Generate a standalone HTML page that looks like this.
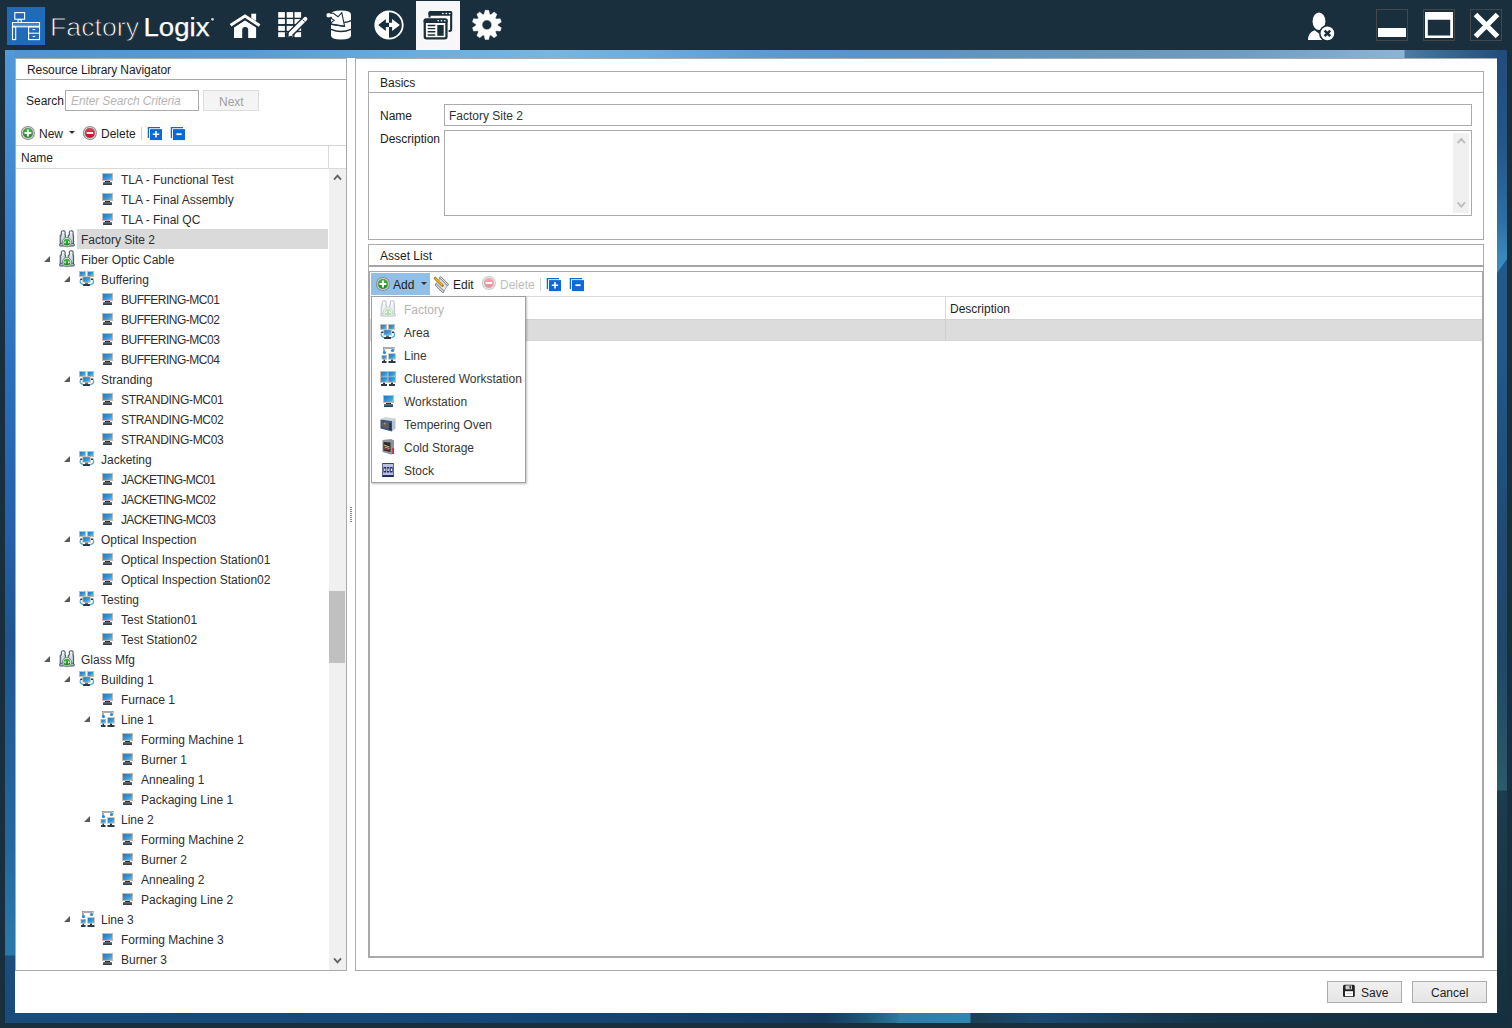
<!DOCTYPE html>
<html><head><meta charset="utf-8">
<style>
*{margin:0;padding:0;box-sizing:border-box}
html,body{width:1512px;height:1028px;overflow:hidden;background:#1a2f3d;font-family:"Liberation Sans", sans-serif;font-size:12px;color:#1a1a1a}
.a{position:absolute}
.ic{position:absolute;overflow:visible}
.t{position:absolute;height:20px;line-height:20px;padding-top:1px;white-space:nowrap;color:#2e2e2e}
.sel{position:absolute;height:20px;background:#dadada}
.mt{position:absolute;height:23px;line-height:23px;padding-top:1px;white-space:nowrap;color:#363636}
.dis{color:#b4b4b4}
.ln{position:absolute;background:#ababab}
</style></head><body>
<svg width="0" height="0" style="position:absolute"><defs><linearGradient id="scr" x1="0" y1="0" x2="1" y2="1"><stop offset="0" stop-color="#1f78c4"/><stop offset="0.6" stop-color="#3a9ad6"/><stop offset="1" stop-color="#6cc6ec"/></linearGradient>
<linearGradient id="kb" x1="0" y1="0" x2="0" y2="1"><stop offset="0" stop-color="#6a747c"/><stop offset="1" stop-color="#2e3840"/></linearGradient>
<linearGradient id="tow" x1="0" y1="0" x2="1" y2="0"><stop offset="0" stop-color="#a9b6bf"/><stop offset="0.5" stop-color="#dfe6ea"/><stop offset="1" stop-color="#9aa8b2"/></linearGradient>
<linearGradient id="grn" x1="0" y1="0" x2="0" y2="1"><stop offset="0" stop-color="#3cc23c"/><stop offset="1" stop-color="#17861d"/></linearGradient>
<linearGradient id="red" x1="0" y1="0" x2="0" y2="1"><stop offset="0" stop-color="#f03a4a"/><stop offset="1" stop-color="#c80a1e"/></linearGradient>
<symbol id="ws" overflow="visible">
 <rect x="3" y="4" width="11" height="8" fill="#c4bcb2"/>
 <rect x="4" y="5" width="9" height="6" fill="url(#scr)"/>
 <rect x="6" y="12" width="5" height="1.2" fill="#26323c"/>
 <rect x="4" y="13" width="9" height="3" rx="0.6" fill="url(#kb)"/>
</symbol>
<symbol id="mon" overflow="visible">
 <rect x="0" y="0" width="7" height="6" fill="#c4bcb2"/>
 <rect x="1" y="1" width="5" height="4" fill="url(#scr)"/>
</symbol>
<symbol id="fac" overflow="visible">
 <path d="M2.3 2.8 Q2.3 1.8 3.5 1.8 H4.9 Q6.1 1.8 6.1 2.8 V6.2 H6.6 V15.2 H1.2 V6.2 H2.3 Z" fill="url(#tow)" stroke="#3e5264" stroke-width="1"/>
 <path d="M10.3 2.8 Q10.3 1.8 11.5 1.8 H12.9 Q14.1 1.8 14.1 2.8 V6.2 H14.6 V15.2 H9.2 V6.2 H10.3 Z" fill="url(#tow)" stroke="#3e5264" stroke-width="1"/>
 <rect x="3" y="3.2" width="2.4" height="1.3" fill="#fff"/>
 <rect x="11" y="3.2" width="2.4" height="1.3" fill="#fff"/>
 <rect x="3.3" y="5.6" width="1.2" height="1.2" fill="#fff" opacity="0.8"/>
 <rect x="11.3" y="5.6" width="1.2" height="1.2" fill="#fff" opacity="0.8"/>
 <path d="M0.6 16.2 Q0.6 14.3 2.5 14.3 H13.5 Q15.4 14.3 15.4 16.2 Q15.4 17 14.5 17 H1.5 Q0.6 17 0.6 16.2 Z" fill="#a9c2d2" stroke="#3e5264" stroke-width="1"/>
 <circle cx="7.9" cy="13.2" r="4.6" fill="#f4f4f4" stroke="#777" stroke-width="0.9"/>
 <circle cx="7.9" cy="13.2" r="3.4" fill="url(#grn)"/>
 <path d="M4.9 13.2 L6.6 11.7 V14.7 Z M10.9 13.2 L9.2 11.7 V14.7 Z" fill="#fff"/>
</symbol>
<symbol id="area" overflow="visible">
 <use href="#mon" x="0" y="2"/>
 <use href="#mon" x="8" y="2"/>
 <path d="M1.5 11 Q0 14 4 15.5 Q8 17 12 15.5 Q16 14 14 11" stroke="#4ab0e0" stroke-width="1.3" fill="none"/>
 <rect x="1.2" y="9.5" width="2.5" height="1.5" fill="#2a3540"/>
 <rect x="11.8" y="9.5" width="2.5" height="1.5" fill="#2a3540"/>
 <rect x="3.3" y="7.4" width="8.5" height="6.2" fill="#c4bcb2"/>
 <rect x="4.2" y="8.2" width="6.7" height="4.6" fill="url(#scr)"/>
 <rect x="6" y="13.7" width="3" height="1" fill="#26323c"/>
 <rect x="4" y="15" width="7" height="2" rx="0.5" fill="#303a42"/>
</symbol>
<symbol id="line" overflow="visible">
 <path d="M4 7 V3 H13.5 V5" stroke="#8a8a8a" stroke-width="2" fill="none"/>
 <path d="M4 7 V3 H13.5 V5" stroke="#f4f4f4" stroke-width="0.6" fill="none"/>
 <circle cx="4.5" cy="7.6" r="1.6" fill="#2f8ad0"/>
 <circle cx="12.5" cy="5.5" r="1.6" fill="#2f8ad0"/>
 <rect x="1.5" y="10" width="5.5" height="4.6" fill="#c4bcb2"/>
 <rect x="2.3" y="10.8" width="3.9" height="3" fill="url(#scr)"/>
 <rect x="8.2" y="8.2" width="7.6" height="6.4" fill="#c4bcb2"/>
 <rect x="9" y="9" width="6" height="4.8" fill="url(#scr)"/>
 <rect x="3.5" y="14.6" width="1.5" height="1.5" fill="#26323c"/>
 <rect x="2" y="16" width="4.5" height="2" fill="#303a42"/>
 <rect x="11" y="14.6" width="2" height="1.5" fill="#26323c"/>
 <rect x="8.5" y="16" width="7" height="2" fill="#303a42"/>
</symbol>
<symbol id="cws" overflow="visible">
 <rect x="0" y="3" width="16" height="11.7" fill="#c4bcb2"/>
 <rect x="1" y="4" width="6.5" height="4.6" fill="url(#scr)"/>
 <rect x="8.5" y="4" width="6.5" height="4.6" fill="url(#scr)"/>
 <rect x="1" y="9.3" width="6.5" height="4.6" fill="url(#scr)"/>
 <rect x="8.5" y="9.3" width="6.5" height="4.6" fill="url(#scr)"/>
 <rect x="3" y="14.7" width="2" height="1.3" fill="#26323c"/>
 <rect x="11" y="14.7" width="2" height="1.3" fill="#26323c"/>
 <rect x="1" y="16" width="6" height="2" fill="#303a42"/>
 <rect x="9" y="16" width="6" height="2" fill="#303a42"/>
</symbol>
<symbol id="oven" overflow="visible">
 <path d="M0.5 5.5 L5 3 L15.5 4.5 L12 7 Z" fill="#ccd6e2"/>
 <path d="M0.5 5.5 L12 7 V17.5 L0.5 14.5 Z" fill="#3d5576"/>
 <path d="M12 7 L15.5 4.5 V14.5 L12 17.5 Z" fill="#b4c3d2"/>
 <path d="M2 8 L8.5 9 V14.6 L2 13 Z" fill="#5c6064"/>
 <circle cx="4.8" cy="9.6" r="1" fill="#e07840"/>
 <rect x="9.4" y="9.4" width="1.8" height="1.3" fill="#111"/>
 <rect x="9.4" y="11.8" width="1.8" height="1.3" fill="#111"/>
 <rect x="9.4" y="14.2" width="1.8" height="1.3" fill="#111"/>
</symbol>
<symbol id="cold" overflow="visible">
 <path d="M2.5 3 L11 2 L14 3.5 V17 L11 17.5 L2.5 15 Z" fill="#8e949a"/>
 <path d="M3.5 5 L10.5 5.5 V15 L3.5 13.5 Z" fill="#2a2c30"/>
 <path d="M4 8 L9.5 10 M4.5 10 L9.5 11.5" stroke="#d8c46a" stroke-width="1"/>
 <path d="M4 11.5 L9 12.8" stroke="#c04050" stroke-width="1"/>
 <rect x="12.3" y="11" width="1.8" height="6" fill="#c0303a"/>
</symbol>
<symbol id="stock" overflow="visible">
 <rect x="2.2" y="3" width="11.6" height="13" fill="#3a4272"/>
 <rect x="3" y="4" width="10" height="11" fill="#b9bfdc"/>
 <rect x="3.5" y="7" width="2.5" height="5.5" fill="#1f2a6a"/>
 <rect x="6.8" y="7" width="2.5" height="5.5" fill="#1f2a6a"/>
 <rect x="10.1" y="7" width="2.5" height="5.5" fill="#1f2a6a"/>
 <rect x="4.2" y="8.5" width="1.2" height="2.5" fill="#fff"/>
 <rect x="7.5" y="8.5" width="1.2" height="2.5" fill="#fff"/>
 <rect x="10.8" y="8.5" width="1.2" height="2.5" fill="#fff"/>
 <rect x="2.2" y="15.5" width="11.6" height="1.5" fill="#1a2560"/>
</symbol>
<symbol id="plus" overflow="visible">
 <circle cx="7.9" cy="7" r="6.5" fill="#f4f4f4" stroke="#8c8c8c" stroke-width="1.1"/>
 <circle cx="7.9" cy="7" r="5" fill="url(#grn)" stroke="#777" stroke-width="0.7"/>
 <path d="M7.9 3.6 V10.4 M4.5 7 H11.3" stroke="#fff" stroke-width="1.9"/>
</symbol>
<symbol id="minus" overflow="visible">
 <circle cx="7.9" cy="7" r="6.5" fill="#f4f4f4" stroke="#8c8c8c" stroke-width="1.1"/>
 <circle cx="7.9" cy="7" r="5" fill="url(#red)" stroke="#777" stroke-width="0.7"/>
 <path d="M4.6 7 H11.2" stroke="#fff" stroke-width="1.9"/>
</symbol>
<symbol id="expand" overflow="visible">
 <path d="M1.4 12 V1.6 H13" stroke="#0a6ad8" stroke-width="1.3" fill="none"/>
 <rect x="3" y="3.1" width="12" height="11" fill="#0a6ad8"/>
 <path d="M9 5 V11.4 M5.8 8.2 H12.2" stroke="#fff" stroke-width="1.6"/>
</symbol>
<symbol id="collapse" overflow="visible">
 <path d="M1.4 12 V1.6 H13" stroke="#0a6ad8" stroke-width="1.3" fill="none"/>
 <rect x="3" y="3.1" width="12" height="11" fill="#0a6ad8"/>
 <path d="M6.4 8.2 H11.6" stroke="#fff" stroke-width="1.8"/>
</symbol>
<symbol id="edit" overflow="visible">
 <path d="M7.5 1 L15 8.5 L10.5 16 L2.5 8.5 Z" fill="#dfe5ec" stroke="#8a9096" stroke-width="0.8"/>
 <path d="M7.6 1.6 L14.4 8.4" stroke="#6d7278" stroke-width="2.6" stroke-linecap="round"/>
 <path d="M7.6 1.6 L14.4 8.4" stroke="#e8ecf0" stroke-width="1.1" stroke-linecap="round"/>
 <path d="M3.2 8.8 L10 15.6" stroke="#6d7278" stroke-width="2.6" stroke-linecap="round"/>
 <path d="M3.2 8.8 L10 15.6" stroke="#e8ecf0" stroke-width="1.1" stroke-linecap="round"/>
 <path d="M2.2 2.2 L9.4 9.4" stroke="#b07810" stroke-width="2.8" stroke-linecap="round"/>
 <path d="M2.4 2.4 L9.2 9.2" stroke="#f0c830" stroke-width="1.2"/>
</symbol>
<symbol id="floppy" overflow="visible">
 <rect x="1" y="0.8" width="11.8" height="12.2" rx="1.5" fill="#222"/>
 <rect x="3.5" y="1.5" width="6.5" height="3.8" fill="#cfcfcf"/>
 <rect x="7.6" y="2" width="1.3" height="2.6" fill="#222"/>
 <rect x="3" y="7.2" width="8" height="5" fill="#fff"/>
 <rect x="4.5" y="9" width="5" height="0.7" fill="#bbb"/>
</symbol>
</defs></svg>
<svg class="a" style="left:0;top:0" width="1512" height="50">
<rect x="7" y="7" width="38" height="38" fill="#1f6bb8"/>
<g fill="none" stroke="#fff" stroke-width="1.1">
<rect x="14.8" y="12.6" width="9.8" height="6.6"/>
<path d="M18 22 V20.5 Q18 19.6 19 19.6 H20.4 Q21.3 19.6 21.3 20.5 V22"/>
<rect x="12.5" y="22.6" width="27" height="4.2"/>
<rect x="12.5" y="26.8" width="3.2" height="12.8"/>
<rect x="28.6" y="26.8" width="10.9" height="12.8"/>
<path d="M28.6 33.2 H39.5"/>
</g>
<path d="M32.6 29.6 H35.2 M32.6 36.4 H35.2" stroke="#fff" stroke-width="1"/>
<rect x="13" y="24.5" width="26" height="2" fill="#fff" opacity="0.35"/>
<text x="50" y="36" font-family="Liberation Sans" font-size="26" fill="#fff" stroke="#1a2f3d" stroke-width="0.85" textLength="89" lengthAdjust="spacingAndGlyphs">Factory</text>
<text x="143.5" y="36" font-family="Liberation Sans" font-size="26" fill="#fff" stroke="#fff" stroke-width="0.25" textLength="66" lengthAdjust="spacingAndGlyphs">Logix</text>
<circle cx="212.5" cy="19.3" r="1.4" fill="#c8d0d6"/>
<!-- home -->
<g fill="#fff">
<rect x="251.3" y="13.7" width="4.8" height="7"/>
<path d="M234 27.4 L245 20.2 L256.1 27.4 V37.9 H248.2 V30 A3 3 0 0 0 242.2 30 V37.9 H234 Z"/>
</g>
<path d="M230.6 26.3 L245 17 L259.6 26.5" stroke="#1a2f3d" stroke-width="5.2" fill="none" stroke-linejoin="miter"/>
<path d="M230.6 25.3 L245 16 L259.6 25.5" stroke="#fff" stroke-width="3" fill="none" stroke-linejoin="miter"/>
<!-- grid pencil -->
<g fill="#fff"><rect x="278.2" y="12.1" width="6.7" height="5.6"/><rect x="286.7" y="12.1" width="6.4" height="5.6"/><rect x="294.5" y="12.1" width="6.6" height="5.6"/><rect x="278.2" y="19.1" width="6.7" height="4.9"/><rect x="286.7" y="19.1" width="6.4" height="4.9"/><rect x="294.5" y="19.1" width="6.6" height="4.9"/><rect x="278.2" y="25.9" width="6.7" height="4.9"/><rect x="286.7" y="25.9" width="6.4" height="4.9"/><rect x="294.5" y="25.9" width="6.6" height="4.9"/><rect x="278.2" y="32.2" width="6.7" height="4.9"/><rect x="286.7" y="32.2" width="6.4" height="4.9"/><rect x="294.5" y="32.2" width="6.6" height="4.9"/></g>
<path d="M289.5 34.8 L305.6 18.7" stroke="#1a2f3d" stroke-width="6.8" stroke-linecap="round"/>
<path d="M288.4 36.6 L289.4 32.2 L292.8 35.6 Z" fill="#fff"/>
<path d="M290.6 33.6 L305.4 18.8" stroke="#fff" stroke-width="4" stroke-linecap="round"/>
<path d="M302.6 19.6 L304.6 21.6" stroke="#1a2f3d" stroke-width="0.9"/>
<!-- database -->
<path d="M331 14.5 Q331 10.4 341 10.4 Q351 10.4 351 14.5 V35.5 Q351 39.4 341 39.4 Q331 39.4 331 35.5 Z" fill="#fff"/>
<path d="M331 29.3 Q341 33.6 351 29.3" stroke="#1a2f3d" stroke-width="1.4" fill="none"/>
<path d="M344.2 22.5 Q348 22.2 351 20.6" stroke="#1a2f3d" stroke-width="1.3" fill="none"/>
<path d="M327.5 13.3 L333.3 13.3 L338 16.8 L341.8 12.6 L344.6 26.4 L331.3 24.3 L331.3 22.6 L334.2 20.3 L331.3 18.4 L331.3 17.2 L327.5 17.2 Z" fill="#fff" stroke="#1a2f3d" stroke-width="1.1" stroke-linejoin="miter"/>
<path d="M331.3 24.3 L344.6 26.4" stroke="#1a2f3d" stroke-width="1.4"/>
<rect x="326.6" y="13.2" width="4" height="4.1" rx="1.2" fill="#fff"/>
<!-- circle arrows -->
<circle cx="389" cy="25" r="13.7" fill="none" stroke="#fff" stroke-width="1.8"/>
<path d="M389 11.3 A13.7 13.7 0 0 0 389 38.7 Z" fill="#fff"/>
<path d="M378.3 24.9 L385.8 18.9 V22.7 H389 V27 H385.8 V30.9 Z" fill="#1a2f3d"/>
<path d="M399.9 24.9 L392.1 18.9 V22.7 H389 V27 H392.1 V30.9 Z" fill="#fff"/>
<!-- selected tab -->
<rect x="416" y="1" width="44" height="49" fill="#f7f7fa"/>
<rect x="429.55" y="12.05" width="21.6" height="18.9" rx="1.6" fill="#fff" stroke="#1a2f3d" stroke-width="2.1"/>
<rect x="428.5" y="11" width="23.7" height="4.7" rx="1.5" fill="#1a2f3d"/>
<g fill="#fff"><ellipse cx="442.9" cy="13.5" rx="0.9" ry="0.7"/><ellipse cx="446.3" cy="13.5" rx="0.9" ry="0.7"/><ellipse cx="449.6" cy="13.5" rx="0.9" ry="0.7"/></g>
<rect x="422.6" y="17.5" width="26" height="23" rx="2" fill="#fff"/>
<rect x="424.75" y="19.65" width="21.7" height="18.7" rx="1.6" fill="#fff" stroke="#1a2f3d" stroke-width="2.3"/>
<rect x="423.6" y="18.5" width="24" height="4.4" rx="1.5" fill="#1a2f3d"/>
<g fill="#fff"><ellipse cx="438.2" cy="20.7" rx="0.9" ry="0.7"/><ellipse cx="441.5" cy="20.7" rx="0.9" ry="0.7"/><ellipse cx="444.8" cy="20.7" rx="0.9" ry="0.7"/></g>
<g stroke="#1a2f3d" stroke-width="1.4" stroke-linecap="round"><path d="M428.2 25.5 H434.8 M428.2 28.6 H434.8 M428.2 31.7 H434.8 M428.2 35 H434.8"/></g>
<rect x="437.3" y="25" width="6.4" height="10.8" fill="#1a2f3d"/>
<!-- gear -->
<path d="M484.10 14.37 L485.14 10.31 L488.66 10.31 L489.70 14.37 L490.82 14.73 L494.05 12.06 L496.90 14.13 L495.36 18.03 L496.05 18.98 L500.24 18.72 L501.32 22.06 L497.78 24.31 L497.78 25.49 L501.32 27.74 L500.24 31.08 L496.05 30.82 L495.36 31.77 L496.90 35.67 L494.05 37.74 L490.82 35.07 L489.70 35.43 L488.66 39.49 L485.14 39.49 L484.10 35.43 L482.98 35.07 L479.75 37.74 L476.90 35.67 L478.44 31.77 L477.75 30.82 L473.56 31.08 L472.48 27.74 L476.02 25.49 L476.02 24.31 L472.48 22.06 L473.56 18.72 L477.75 18.98 L478.44 18.03 L476.90 14.13 L479.75 12.06 L482.98 14.73 Z M491.70 24.9 A4.8 4.8 0 1 0 482.10 24.9 A4.8 4.8 0 1 0 491.70 24.9 Z" fill="#fff" fill-rule="evenodd" stroke="#fff" stroke-width="0.4" stroke-linejoin="round"/>
<!-- user -->
<ellipse cx="1319" cy="21.3" rx="6.4" ry="8.8" fill="#fff"/>
<path d="M1308 40 Q1308.2 32.5 1314.5 30.3 L1319 33.5 L1323.5 30.3 Q1330 32.5 1330 40 Z" fill="#fff"/>
<circle cx="1327.4" cy="33.4" r="8.4" fill="#1a2f3d"/>
<circle cx="1327.4" cy="33.4" r="6.8" fill="#fff"/>
<path d="M1324.6 30.6 L1330.2 36.2 M1330.2 30.6 L1324.6 36.2" stroke="#1a2f3d" stroke-width="2.5"/>
<!-- window buttons -->
<g fill="none" stroke="#42474a" stroke-width="1">
<rect x="1376.5" y="9.5" width="31" height="31"/>
<rect x="1423.5" y="9.5" width="31" height="31"/>
<rect x="1470.5" y="9.5" width="31" height="31"/>
</g>
<rect x="1378" y="28" width="28" height="9" fill="#fff"/>
<path d="M1425 12 H1453 V38 H1425 Z M1427.8 19.8 V35.6 H1450.2 V19.8 Z" fill="#fff" fill-rule="evenodd"/>
<path d="M1475.5 14.5 L1497.5 36.5 M1497.5 14.5 L1475.5 36.5" stroke="#fff" stroke-width="5.2"/>
</svg>
<!-- frame -->
<div class="a" id="ftop" style="left:5px;top:50px;width:1502px;height:8px;background:linear-gradient(90deg,#4c94d6 0px,#559dda 245px,#68aedf 415px,#76b6e0 545px,#6cacdf 645px,#5b9bd9 751px,#5894d0 845px,#5e94c4 945px,#6696bc 1045px,#6a98ba 1129px,#709dc2 1245px,#7fa9cc 1325px,#8db4d4 1399px,#4d7aa4 1400px,#3f6e9b 1425px,#214a7a 1502px)"></div>
<div class="a" id="fleft" style="left:5px;top:50px;width:10px;height:973px;background:linear-gradient(180deg,#5199d9 0px,#3d86cf 150px,#2a6fbd 320px,#2360a8 490px,#1f5690 590px,#21609a 700px,#2468a0 800px,#2a78a8 890px,#2a78aa 905px,#1b4f7d 906px,#174a78 973px)"></div>
<div class="a" id="fright" style="left:1497px;top:50px;width:10px;height:973px;background:linear-gradient(180deg,#21598b 200px,#22588a 300px,#1f4b72 490px,#1f4767 600px,#275566 710px,#2b5c6a 740px,#1c3d4e 741px,#15303f 973px)"></div>
<div class="a" style="left:1497px;top:50px;width:10px;height:225px;clip-path:polygon(0 0,100% 0,100% 209px,0 223px);background:linear-gradient(180deg,#214b7b 0px,#25578a 100px,#2d6ea4 170px,#3888bc 205px,#3a8cc0 223px)"></div>
<div class="a" id="fbot" style="left:5px;top:1013px;width:1502px;height:10px;background:linear-gradient(90deg,#194c7a 0px,#174776 500px,#153f69 700px,#163a5c 820px,#1f5576 860px,#2a7498 890px,#2e7ea6 895px,#2e86b0 965px,#1b3f57 966px,#1d4a72 1030px,#163549 1200px,#132f40 1502px)"></div>
<!-- content -->
<div class="a" style="left:15px;top:58px;width:1482px;height:955px;background:#fff"></div>

<!-- LEFT PANEL -->
<div class="a" style="left:15px;top:58px;width:332px;height:913px;border:1px solid #ababab"></div>
<div class="a" style="left:27px;top:60px;line-height:20px;font-size:12px;letter-spacing:-0.08px;color:#1c1c1c">Resource Library Navigator</div>
<div class="ln" style="left:16px;top:79px;width:330px;height:1px;background:#a9a9a9"></div>
<div class="a" style="left:26px;top:91px;line-height:20px;color:#1c1c1c">Search</div>
<div class="a" style="left:65px;top:90px;width:134px;height:21px;border:1px solid #ababab"></div>
<div class="a" style="left:71px;top:91px;line-height:20px;font-style:italic;letter-spacing:-0.12px;color:#b5b5b5">Enter Search Criteria</div>
<div class="a" style="left:203px;top:90px;width:56px;height:21px;border:1px solid #dcdcdc;background:#f4f4f4"></div>
<div class="a" style="left:219px;top:92px;line-height:20px;color:#a0a0a0">Next</div>
<!-- toolbar -->
<svg class="ic" style="left:20px;top:126px" width="16" height="16"><use href="#plus"/></svg>
<div class="a" style="left:39px;top:124px;line-height:20px;color:#1e1e1e">New</div>
<svg class="ic" style="left:68px;top:130px" width="8" height="5"><path d="M1 1 L7 1 L4 4 Z" fill="#333"/></svg>
<svg class="ic" style="left:82px;top:126px" width="16" height="16"><use href="#minus"/></svg>
<div class="a" style="left:101px;top:124px;line-height:20px;color:#1e1e1e">Delete</div>
<div class="ln" style="left:141px;top:127px;width:1px;height:13px;background:#d0d0d0"></div>
<svg class="ic" style="left:147px;top:126px" width="16" height="16"><use href="#expand"/></svg>
<svg class="ic" style="left:170px;top:126px" width="16" height="16"><use href="#collapse"/></svg>
<!-- grid -->
<div class="ln" style="left:16px;top:145px;width:330px;height:1px;background:#d4d4d4"></div>
<div class="a" style="left:21px;top:148px;line-height:20px;color:#1e1e1e">Name</div>
<div class="ln" style="left:16px;top:168px;width:330px;height:1px;background:#d9d9d9"></div>
<div class="ln" style="left:328px;top:146px;width:1px;height:22px;background:#d9d9d9"></div>
<div class="a" style="left:329px;top:169px;width:17px;height:801px;background:#f0f0f0"></div>
<div class="a" style="left:329px;top:591px;width:16px;height:72px;background:#c0c0c0"></div>
<svg class="ic" style="left:329px;top:169px" width="17" height="16"><path d="M5 10.6 L8.5 6.6 L12 10.6" stroke="#606060" stroke-width="1.8" fill="none"/></svg>
<svg class="ic" style="left:329px;top:953px" width="17" height="16"><path d="M5 5.4 L8.5 9.4 L12 5.4" stroke="#606060" stroke-width="1.8" fill="none"/></svg>
<div class="a" style="left:16px;top:169px;width:313px;height:801px;overflow:hidden">
<div class="a" style="left:-16px;top:-169px;width:1512px;height:1028px">
<svg class="ic" style="left:99px;top:169px" width="22" height="20"><use href="#ws"/></svg>
<div class="t" style="left:121px;top:169px;">TLA - Functional Test</div>
<svg class="ic" style="left:99px;top:189px" width="22" height="20"><use href="#ws"/></svg>
<div class="t" style="left:121px;top:189px;">TLA - Final Assembly</div>
<svg class="ic" style="left:99px;top:209px" width="22" height="20"><use href="#ws"/></svg>
<div class="t" style="left:121px;top:209px;">TLA - Final QC</div>
<div class="sel" style="left:77px;top:229px;width:251px"></div>
<svg class="ic" style="left:59px;top:229px" width="22" height="20"><use href="#fac"/></svg>
<div class="t" style="left:81px;top:229px;">Factory Site 2</div>
<svg class="ic" style="left:43px;top:249px" width="8" height="20"><path d="M1 13 L7 13 L7 7 Z" fill="#595959"/></svg>
<svg class="ic" style="left:59px;top:249px" width="22" height="20"><use href="#fac"/></svg>
<div class="t" style="left:81px;top:249px;">Fiber Optic Cable</div>
<svg class="ic" style="left:63px;top:269px" width="8" height="20"><path d="M1 13 L7 13 L7 7 Z" fill="#595959"/></svg>
<svg class="ic" style="left:79px;top:269px" width="22" height="20"><use href="#area"/></svg>
<div class="t" style="left:101px;top:269px;">Buffering</div>
<svg class="ic" style="left:99px;top:289px" width="22" height="20"><use href="#ws"/></svg>
<div class="t" style="left:121px;top:289px;letter-spacing:-0.5px;">BUFFERING-MC01</div>
<svg class="ic" style="left:99px;top:309px" width="22" height="20"><use href="#ws"/></svg>
<div class="t" style="left:121px;top:309px;letter-spacing:-0.5px;">BUFFERING-MC02</div>
<svg class="ic" style="left:99px;top:329px" width="22" height="20"><use href="#ws"/></svg>
<div class="t" style="left:121px;top:329px;letter-spacing:-0.5px;">BUFFERING-MC03</div>
<svg class="ic" style="left:99px;top:349px" width="22" height="20"><use href="#ws"/></svg>
<div class="t" style="left:121px;top:349px;letter-spacing:-0.5px;">BUFFERING-MC04</div>
<svg class="ic" style="left:63px;top:369px" width="8" height="20"><path d="M1 13 L7 13 L7 7 Z" fill="#595959"/></svg>
<svg class="ic" style="left:79px;top:369px" width="22" height="20"><use href="#area"/></svg>
<div class="t" style="left:101px;top:369px;">Stranding</div>
<svg class="ic" style="left:99px;top:389px" width="22" height="20"><use href="#ws"/></svg>
<div class="t" style="left:121px;top:389px;letter-spacing:-0.3px;">STRANDING-MC01</div>
<svg class="ic" style="left:99px;top:409px" width="22" height="20"><use href="#ws"/></svg>
<div class="t" style="left:121px;top:409px;letter-spacing:-0.3px;">STRANDING-MC02</div>
<svg class="ic" style="left:99px;top:429px" width="22" height="20"><use href="#ws"/></svg>
<div class="t" style="left:121px;top:429px;letter-spacing:-0.3px;">STRANDING-MC03</div>
<svg class="ic" style="left:63px;top:449px" width="8" height="20"><path d="M1 13 L7 13 L7 7 Z" fill="#595959"/></svg>
<svg class="ic" style="left:79px;top:449px" width="22" height="20"><use href="#area"/></svg>
<div class="t" style="left:101px;top:449px;">Jacketing</div>
<svg class="ic" style="left:99px;top:469px" width="22" height="20"><use href="#ws"/></svg>
<div class="t" style="left:121px;top:469px;letter-spacing:-0.65px;">JACKETING-MC01</div>
<svg class="ic" style="left:99px;top:489px" width="22" height="20"><use href="#ws"/></svg>
<div class="t" style="left:121px;top:489px;letter-spacing:-0.65px;">JACKETING-MC02</div>
<svg class="ic" style="left:99px;top:509px" width="22" height="20"><use href="#ws"/></svg>
<div class="t" style="left:121px;top:509px;letter-spacing:-0.65px;">JACKETING-MC03</div>
<svg class="ic" style="left:63px;top:529px" width="8" height="20"><path d="M1 13 L7 13 L7 7 Z" fill="#595959"/></svg>
<svg class="ic" style="left:79px;top:529px" width="22" height="20"><use href="#area"/></svg>
<div class="t" style="left:101px;top:529px;">Optical Inspection</div>
<svg class="ic" style="left:99px;top:549px" width="22" height="20"><use href="#ws"/></svg>
<div class="t" style="left:121px;top:549px;">Optical Inspection Station01</div>
<svg class="ic" style="left:99px;top:569px" width="22" height="20"><use href="#ws"/></svg>
<div class="t" style="left:121px;top:569px;">Optical Inspection Station02</div>
<svg class="ic" style="left:63px;top:589px" width="8" height="20"><path d="M1 13 L7 13 L7 7 Z" fill="#595959"/></svg>
<svg class="ic" style="left:79px;top:589px" width="22" height="20"><use href="#area"/></svg>
<div class="t" style="left:101px;top:589px;">Testing</div>
<svg class="ic" style="left:99px;top:609px" width="22" height="20"><use href="#ws"/></svg>
<div class="t" style="left:121px;top:609px;">Test Station01</div>
<svg class="ic" style="left:99px;top:629px" width="22" height="20"><use href="#ws"/></svg>
<div class="t" style="left:121px;top:629px;">Test Station02</div>
<svg class="ic" style="left:43px;top:649px" width="8" height="20"><path d="M1 13 L7 13 L7 7 Z" fill="#595959"/></svg>
<svg class="ic" style="left:59px;top:649px" width="22" height="20"><use href="#fac"/></svg>
<div class="t" style="left:81px;top:649px;">Glass Mfg</div>
<svg class="ic" style="left:63px;top:669px" width="8" height="20"><path d="M1 13 L7 13 L7 7 Z" fill="#595959"/></svg>
<svg class="ic" style="left:79px;top:669px" width="22" height="20"><use href="#area"/></svg>
<div class="t" style="left:101px;top:669px;">Building 1</div>
<svg class="ic" style="left:99px;top:689px" width="22" height="20"><use href="#ws"/></svg>
<div class="t" style="left:121px;top:689px;">Furnace 1</div>
<svg class="ic" style="left:83px;top:709px" width="8" height="20"><path d="M1 13 L7 13 L7 7 Z" fill="#595959"/></svg>
<svg class="ic" style="left:99px;top:709px" width="22" height="20"><use href="#line"/></svg>
<div class="t" style="left:121px;top:709px;">Line 1</div>
<svg class="ic" style="left:119px;top:729px" width="22" height="20"><use href="#ws"/></svg>
<div class="t" style="left:141px;top:729px;">Forming Machine 1</div>
<svg class="ic" style="left:119px;top:749px" width="22" height="20"><use href="#ws"/></svg>
<div class="t" style="left:141px;top:749px;">Burner 1</div>
<svg class="ic" style="left:119px;top:769px" width="22" height="20"><use href="#ws"/></svg>
<div class="t" style="left:141px;top:769px;">Annealing 1</div>
<svg class="ic" style="left:119px;top:789px" width="22" height="20"><use href="#ws"/></svg>
<div class="t" style="left:141px;top:789px;">Packaging Line 1</div>
<svg class="ic" style="left:83px;top:809px" width="8" height="20"><path d="M1 13 L7 13 L7 7 Z" fill="#595959"/></svg>
<svg class="ic" style="left:99px;top:809px" width="22" height="20"><use href="#line"/></svg>
<div class="t" style="left:121px;top:809px;">Line 2</div>
<svg class="ic" style="left:119px;top:829px" width="22" height="20"><use href="#ws"/></svg>
<div class="t" style="left:141px;top:829px;">Forming Machine 2</div>
<svg class="ic" style="left:119px;top:849px" width="22" height="20"><use href="#ws"/></svg>
<div class="t" style="left:141px;top:849px;">Burner 2</div>
<svg class="ic" style="left:119px;top:869px" width="22" height="20"><use href="#ws"/></svg>
<div class="t" style="left:141px;top:869px;">Annealing 2</div>
<svg class="ic" style="left:119px;top:889px" width="22" height="20"><use href="#ws"/></svg>
<div class="t" style="left:141px;top:889px;">Packaging Line 2</div>
<svg class="ic" style="left:63px;top:909px" width="8" height="20"><path d="M1 13 L7 13 L7 7 Z" fill="#595959"/></svg>
<svg class="ic" style="left:79px;top:909px" width="22" height="20"><use href="#line"/></svg>
<div class="t" style="left:101px;top:909px;">Line 3</div>
<svg class="ic" style="left:99px;top:929px" width="22" height="20"><use href="#ws"/></svg>
<div class="t" style="left:121px;top:929px;">Forming Machine 3</div>
<svg class="ic" style="left:99px;top:949px" width="22" height="20"><use href="#ws"/></svg>
<div class="t" style="left:121px;top:949px;">Burner 3</div>
</div></div>
<!-- splitter grip -->
<svg class="ic" style="left:350px;top:507px" width="2" height="16"><path d="M0 0.5H2M0 2.5H2M0 4.5H2M0 6.5H2M0 8.5H2M0 10.5H2M0 12.5H2M0 14.5H2" stroke="#8a8a8a" stroke-width="1"/></svg>

<!-- RIGHT PANEL -->
<div class="a" style="left:355px;top:58px;width:1142px;height:913px;border:1px solid #ababab;border-right:none"></div>
<!-- basics -->
<div class="a" style="left:368px;top:71px;width:1116px;height:169px;border:1px solid #ababab"></div>
<div class="ln" style="left:369px;top:92px;width:1114px;height:1px"></div>
<div class="a" style="left:380px;top:73px;line-height:20px;color:#1c1c1c">Basics</div>
<div class="a" style="left:380px;top:106px;line-height:20px;color:#1c1c1c">Name</div>
<div class="a" style="left:444px;top:104px;width:1028px;height:22px;border:1px solid #ababab"></div>
<div class="a" style="left:449px;top:106px;line-height:20px;color:#333">Factory Site 2</div>
<div class="a" style="left:380px;top:129px;line-height:20px;color:#1c1c1c">Description</div>
<div class="a" style="left:444px;top:130px;width:1028px;height:86px;border:1px solid #ababab"></div>
<div class="a" style="left:1453px;top:133px;width:16px;height:80px;background:#f0f0f0"></div>
<svg class="ic" style="left:1453px;top:133px" width="16" height="16"><path d="M4.6 10.2 L8.3 6 L12 10.2" stroke="#bdbdbd" stroke-width="1.9" fill="none"/></svg>
<svg class="ic" style="left:1453px;top:197px" width="16" height="16"><path d="M4.6 5.4 L8.3 9.6 L12 5.4" stroke="#bdbdbd" stroke-width="1.9" fill="none"/></svg>
<!-- asset list -->
<div class="a" style="left:368px;top:244px;width:1116px;height:714px;border:1px solid #ababab"></div>
<div class="a" style="left:380px;top:246px;line-height:20px;color:#1c1c1c">Asset List</div>
<div class="ln" style="left:369px;top:265px;width:1114px;height:2px;background:#a6a6a6"></div>
<div class="a" style="left:368px;top:271px;width:1116px;height:687px;border:2px solid #a9a9a9;border-top:1px solid #a9a9a9"></div>
<div class="ln" style="left:370px;top:296px;width:1112px;height:1px;background:#dadada"></div>
<div class="ln" style="left:370px;top:319px;width:1112px;height:22px;background:#dcdcdc;border-top:1px solid #d3d3d3;border-bottom:1px solid #d6d6d6"></div>
<div class="ln" style="left:945px;top:297px;width:1px;height:22px;background:#d9d9d9"></div>
<div class="ln" style="left:945px;top:319px;width:1px;height:22px;background:#cfcfcf"></div>
<div class="a" style="left:950px;top:299px;line-height:20px;color:#1e1e1e">Description</div>
<!-- asset toolbar -->
<div class="a" style="left:371px;top:273px;width:59px;height:22px;background:#91bfe6"></div>
<svg class="ic" style="left:375px;top:277px" width="16" height="16"><use href="#plus"/></svg>
<div class="a" style="left:393px;top:275px;line-height:20px;color:#1e1e1e">Add</div>
<svg class="ic" style="left:420px;top:281px" width="8" height="5"><path d="M1 1 L7 1 L4 4 Z" fill="#333"/></svg>
<svg class="ic" style="left:433px;top:276px" width="16" height="17"><use href="#edit"/></svg>
<div class="a" style="left:453px;top:275px;line-height:20px;color:#1e1e1e">Edit</div>
<svg class="ic" style="left:481px;top:276px;opacity:.45" width="16" height="16"><use href="#minus"/></svg>
<div class="a" style="left:500px;top:275px;line-height:20px;color:#bdbdbd">Delete</div>
<div class="ln" style="left:540px;top:278px;width:1px;height:13px;background:#d0d0d0"></div>
<svg class="ic" style="left:546px;top:277px" width="16" height="16"><use href="#expand"/></svg>
<svg class="ic" style="left:569px;top:277px" width="16" height="16"><use href="#collapse"/></svg>
<!-- dropdown menu -->
<div class="a" style="left:371px;top:296px;width:155px;height:187px;border:1px solid #a0a0a0;background:#fff;box-shadow:1px 1px 2px rgba(0,0,0,.25)"></div>
<svg class="ic" style="left:380px;top:299px" width="22" height="20" opacity="0.35"><use href="#fac"/></svg>
<div class="mt dis" style="left:404px;top:298px">Factory</div>
<svg class="ic" style="left:380px;top:322px" width="22" height="20"><use href="#area"/></svg>
<div class="mt" style="left:404px;top:321px">Area</div>
<svg class="ic" style="left:380px;top:345px" width="22" height="20"><use href="#line"/></svg>
<div class="mt" style="left:404px;top:344px">Line</div>
<svg class="ic" style="left:380px;top:368px" width="22" height="20"><use href="#cws"/></svg>
<div class="mt" style="left:404px;top:367px">Clustered Workstation</div>
<svg class="ic" style="left:380px;top:391px" width="22" height="20"><use href="#ws"/></svg>
<div class="mt" style="left:404px;top:390px">Workstation</div>
<svg class="ic" style="left:380px;top:414px" width="22" height="20"><use href="#oven"/></svg>
<div class="mt" style="left:404px;top:413px">Tempering Oven</div>
<svg class="ic" style="left:380px;top:437px" width="22" height="20"><use href="#cold"/></svg>
<div class="mt" style="left:404px;top:436px">Cold Storage</div>
<svg class="ic" style="left:380px;top:460px" width="22" height="20"><use href="#stock"/></svg>
<div class="mt" style="left:404px;top:459px">Stock</div>
<!-- footer -->
<div class="a" style="left:1327px;top:981px;width:75px;height:22px;border:1px solid #acacac;background:linear-gradient(#f0f0f0,#e5e5e5)"></div>
<svg class="ic" style="left:1342px;top:984px" width="14" height="14"><use href="#floppy"/></svg>
<div class="a" style="left:1361px;top:983px;line-height:20px;color:#1e1e1e">Save</div>
<div class="a" style="left:1412px;top:981px;width:75px;height:22px;border:1px solid #acacac;background:linear-gradient(#f0f0f0,#e5e5e5)"></div>
<div class="a" style="left:1431px;top:983px;line-height:20px;color:#1e1e1e">Cancel</div>
</body></html>
